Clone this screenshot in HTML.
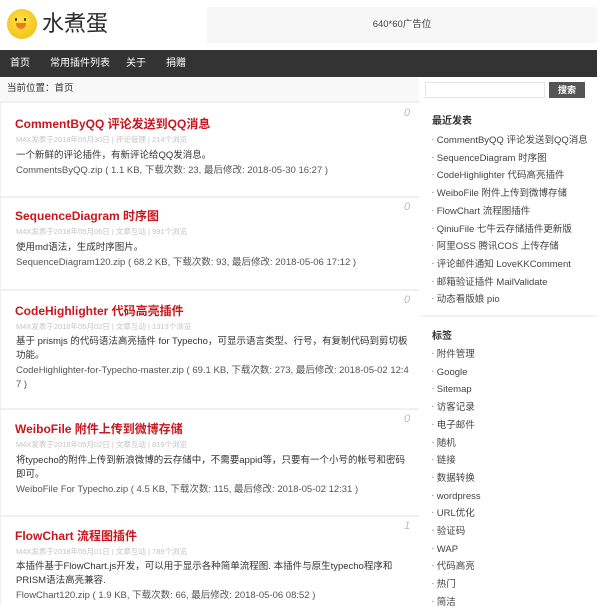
<!DOCTYPE html>
<html><head><meta charset="utf-8"><style>
*{margin:0;padding:0;box-sizing:border-box}
body{width:604px;height:605px;overflow:hidden;background:#fff;font-family:"Liberation Sans","Noto Sans CJK SC",sans-serif;position:relative;color:#333}
.a{position:absolute;white-space:nowrap}
.nav{position:absolute;left:0;top:50px;width:597px;height:27px;background:#333}
.nav span{position:absolute;top:0;line-height:27px;color:#fff;font-size:10px}
.bc{position:absolute;left:0;top:77px;width:419px;height:24px;background:#f8f8f8}
.main{position:absolute;left:0;top:101px;width:419px;height:504px;background:#f0f0f0;border-right:1px solid #eee}
.card{position:absolute;left:1px;width:418px;background:#fff}
.t{position:absolute;left:14px;font-size:12px;line-height:14px;font-weight:bold;color:#c8161e;white-space:nowrap}
.m{position:absolute;left:15px;font-size:7.5px;line-height:10px;color:#c4c4c4;white-space:nowrap}
.d{position:absolute;left:15px;font-size:9.5px;color:#333;line-height:13.5px;width:395px;white-space:normal}
.f{position:absolute;left:15px;font-size:9.5px;color:#555;line-height:13.5px;width:395px}
.n{position:absolute;left:403px;font-size:11px;line-height:12px;font-style:italic;color:#bbb}
.side{position:absolute;left:420px;top:77px;width:177px;height:528px;background:#fff}
.sh{position:absolute;left:432px;font-size:10px;line-height:14px;font-weight:bold;color:#333}
.si{position:absolute;left:432px;font-size:9.5px;line-height:14px;height:14px;color:#444;white-space:nowrap}
.si:before{content:"▪";font-size:5px;color:#999;margin-right:3px;vertical-align:2px;line-height:0}
</style></head><body>
<div class="a" style="left:7px;top:9px;width:30px;height:30px;border-radius:50%;background:radial-gradient(circle at 45% 40%,#ffe24a,#f4c41b 70%,#f1e8c0 100%)"></div>
<div class="a" style="left:15px;top:18px;width:2px;height:3px;background:#333;border-radius:1px"></div>
<div class="a" style="left:24px;top:18px;width:2px;height:3px;background:#333;border-radius:1px"></div>
<div class="a" style="left:16px;top:23px;width:10px;height:6px;background:#f07a1a;border-radius:0 0 5px 5px"></div>
<div class="a" style="left:42px;top:9px;font-size:22px;line-height:30px;color:#2a2a2a">水煮蛋</div>
<div class="a" style="left:207px;top:7px;width:390px;height:36px;background:#f7f7f7;font-size:9.5px;color:#444;text-align:center;line-height:36px">640*60广告位</div>
<div class="nav"><span style="left:10px">首页</span><span style="left:50px">常用插件列表</span><span style="left:126px">关于</span><span style="left:166px">捐赠</span></div>
<div class="bc"><span class="a" style="left:7px;top:0;line-height:24px;font-size:9.5px;color:#333">当前位置：首页</span></div>
<div class="main">
<div class="card" style="top:2px;height:93px">
<div class="n" style="top:4px">0</div>
<div class="t" style="top:14px">CommentByQQ 评论发送到QQ消息</div>
<div class="m" style="top:32px">M4X发表于2018年05月30日 | 评论管理 | 214个浏览</div>
<div class="d" style="top:46px">一个新鲜的评论插件，有新评论给QQ发消息。</div>
<div class="f" style="top:61px">CommentsByQQ.zip ( 1.1 KB, 下载次数: 23, 最后修改: 2018-05-30 16:27 )</div>
</div>
<div class="card" style="top:97px;height:91px">
<div class="n" style="top:3px">0</div>
<div class="t" style="top:11px">SequenceDiagram 时序图</div>
<div class="m" style="top:29px">M4X发表于2018年05月06日 | 文章互动 | 991个浏览</div>
<div class="d" style="top:43px">使用md语法，生成时序图片。</div>
<div class="f" style="top:58px">SequenceDiagram120.zip ( 68.2 KB, 下载次数: 93, 最后修改: 2018-05-06 17:12 )</div>
</div>
<div class="card" style="top:190px;height:117px">
<div class="n" style="top:3px">0</div>
<div class="t" style="top:13px">CodeHighlighter 代码高亮插件</div>
<div class="m" style="top:31px">M4X发表于2018年05月02日 | 文章互动 | 1313个浏览</div>
<div class="d" style="top:44px">基于 prismjs 的代码语法高亮插件 for Typecho，可显示语言类型、行号，有复制代码到剪切板功能。</div>
<div class="f" style="top:73px;white-space:normal;word-break:break-all">CodeHighlighter-for-Typecho-master.zip ( 69.1 KB, 下载次数: 273, 最后修改: 2018-05-02 12:47 )</div>
</div>
<div class="card" style="top:309px;height:105px">
<div class="n" style="top:3px">0</div>
<div class="t" style="top:12px">WeiboFile 附件上传到微博存储</div>
<div class="m" style="top:30px">M4X发表于2018年05月02日 | 文章互动 | 819个浏览</div>
<div class="d" style="top:44px">将typecho的附件上传到新浪微博的云存储中，不需要appid等，只要有一个小号的帐号和密码即可。</div>
<div class="f" style="top:73px">WeiboFile For Typecho.zip ( 4.5 KB, 下载次数: 115, 最后修改: 2018-05-02 12:31 )</div>
</div>
<div class="card" style="top:416px;height:88px">
<div class="n" style="top:3px">1</div>
<div class="t" style="top:12px">FlowChart 流程图插件</div>
<div class="m" style="top:30px">M4X发表于2018年05月01日 | 文章互动 | 789个浏览</div>
<div class="d" style="top:43px">本插件基于FlowChart.js开发，可以用于显示各种简单流程图. 本插件与原生typecho程序和PRISM语法高亮兼容.</div>
<div class="f" style="top:72px">FlowChart120.zip ( 1.9 KB, 下载次数: 66, 最后修改: 2018-05-06 08:52 )</div>
</div>
</div>
<div class="side"></div>
<div class="a" style="left:425px;top:82px;width:120px;height:16px;border:1px solid #e4e4e4;background:#fff"></div>
<div class="a" style="left:549px;top:82px;width:36px;height:16px;background:#555;color:#fff;font-size:9px;text-align:center;line-height:16px;font-weight:bold">搜索</div>
<div class="a" style="left:420px;top:315px;width:177px;height:2px;background:#f2f2f2"></div>
<div class="sh" style="top:115px">最近发表</div>
<div class="si" style="top:134px">CommentByQQ 评论发送到QQ消息</div>
<div class="si" style="top:152px">SequenceDiagram 时序图</div>
<div class="si" style="top:169px">CodeHighlighter 代码高亮插件</div>
<div class="si" style="top:187px">WeiboFile 附件上传到微博存储</div>
<div class="si" style="top:205px">FlowChart 流程图插件</div>
<div class="si" style="top:223px">QiniuFile 七牛云存储插件更新版</div>
<div class="si" style="top:240px">阿里OSS 腾讯COS 上传存储</div>
<div class="si" style="top:258px">评论邮件通知 LoveKKComment</div>
<div class="si" style="top:276px">邮箱验证插件 MailValidate</div>
<div class="si" style="top:293px">动态看版娘 pio</div>
<div class="sh" style="top:330px">标签</div>
<div class="si" style="top:348px">附件管理</div>
<div class="si" style="top:366px">Google</div>
<div class="si" style="top:383px">Sitemap</div>
<div class="si" style="top:401px">访客记录</div>
<div class="si" style="top:419px">电子邮件</div>
<div class="si" style="top:437px">随机</div>
<div class="si" style="top:454px">链接</div>
<div class="si" style="top:472px">数据转换</div>
<div class="si" style="top:490px">wordpress</div>
<div class="si" style="top:507px">URL优化</div>
<div class="si" style="top:525px">验证码</div>
<div class="si" style="top:543px">WAP</div>
<div class="si" style="top:560px">代码高亮</div>
<div class="si" style="top:578px">热门</div>
<div class="si" style="top:596px">简洁</div>
</body></html>
